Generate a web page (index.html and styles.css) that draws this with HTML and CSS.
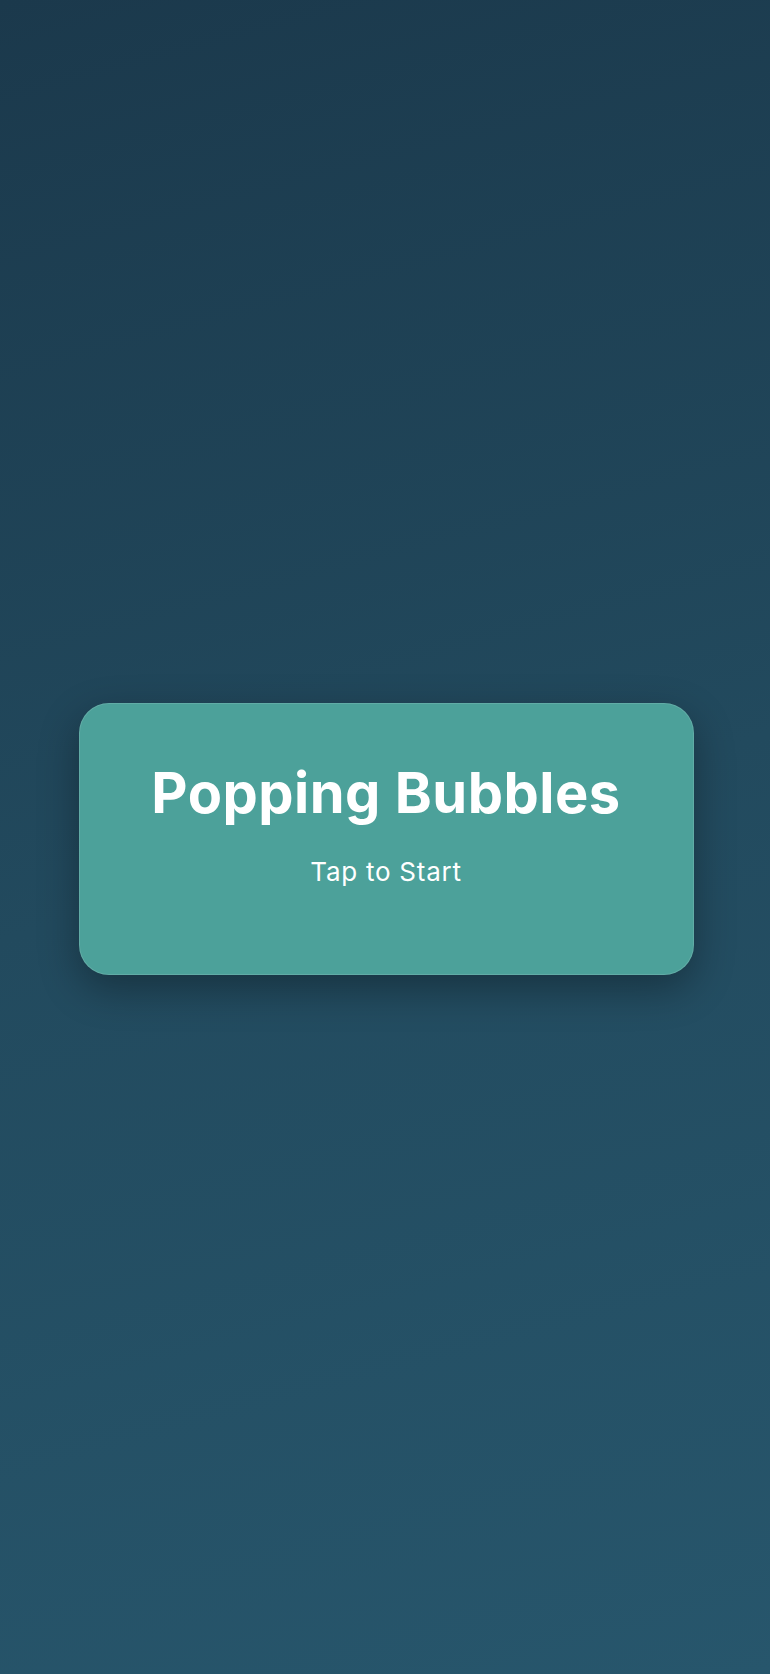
FILE: index.html
```html
<!DOCTYPE html>
<html lang="en">
<head>
<meta charset="utf-8">
<title>Popping Bubbles</title>
<link rel="stylesheet" href="styles.css">
</head>
<body>
<main class="screen">
  <section class="card">
    <h1 class="title">Popping Bubbles</h1>
    <p class="subtitle">Tap to Start</p>
  </section>
</main>
</body>
</html>
```
FILE: styles.css
```css
html, body {
  margin: 0;
  padding: 0;
  height: 100%;
}
body {
  font-family: Inter, "Noto Sans", "Liberation Sans", sans-serif;
  background: linear-gradient(165deg, #1b394c 0%, #224a5e 50%, #27566c 100%);
  color: #fff;
}
.screen {
  height: 1674px;
  display: flex;
  align-items: center;
  justify-content: center;
}
.card {
  box-sizing: border-box;
  width: 615px;
  height: 272px;
  margin-top: 3px;
  margin-left: 2px;
  padding: 56px 24px 0;
  background: #4ca19a;
  border: 1px solid rgba(255, 255, 255, 0.12);
  border-radius: 30px;
  box-shadow: 0 14px 40px rgba(0, 0, 0, 0.32);
  text-align: center;
}
.title {
  margin: 0;
  font-size: 56px;
  line-height: 66px;
  font-weight: 700;
  letter-spacing: 0.5px;
}
.subtitle {
  margin: 26px 0 0;
  font-size: 26px;
  line-height: 39px;
  font-weight: 400;
  letter-spacing: 0.75px;
}
```
